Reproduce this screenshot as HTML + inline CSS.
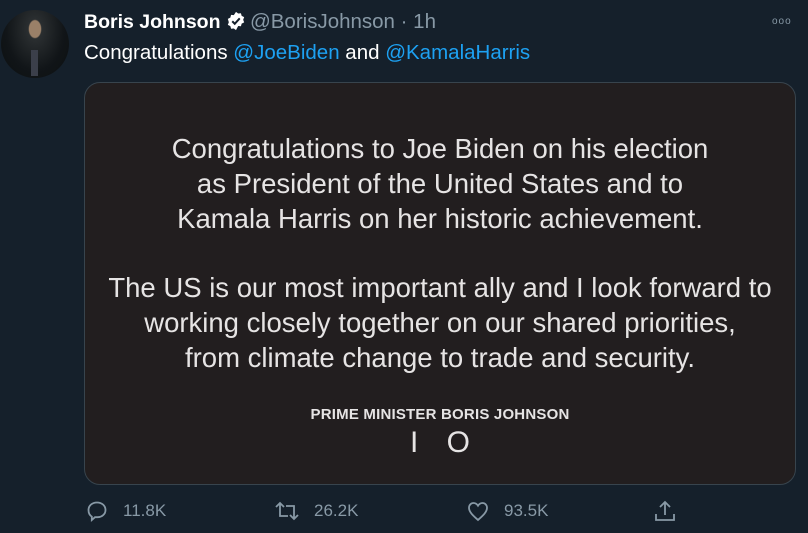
<!DOCTYPE html>
<html><head><meta charset="utf-8"><style>
body{margin:0;width:808px;height:533px;background:#15202b;font-family:"Liberation Sans",sans-serif;overflow:hidden;position:relative}
.av{position:absolute;left:1px;top:10px;width:68px;height:68px;border-radius:50%;background:radial-gradient(ellipse at 50% 28%,#9a8068 0 12%,#2a2e30 14%,#111518 60%,#0b0f10 100%);}
.tie{position:absolute;left:31px;top:50px;width:7px;height:26px;background:#3b3f4a}
.name{position:absolute;left:84px;top:10px;font-size:19.5px;color:#fff;white-space:nowrap}
.name b{font-weight:bold}
.name .h{color:#8899a6;margin-left:4px;font-size:20.5px}
.txt{position:absolute;left:84px;top:41px;font-size:20.5px;color:#fff}
.txt a{color:#1da1f2}
.dots{position:absolute;left:772px;top:16px;color:#8899a6;font-size:10px;letter-spacing:1px}
.card{position:absolute;left:84px;top:82px;width:710px;height:401px;border:1px solid #38444d;border-radius:16px;background:#221e1f;color:#e6e4e4;text-align:center}
.p{position:absolute;left:0;width:100%;font-size:27.5px;line-height:35px;font-weight:300}
.pm{position:absolute;left:0;width:100%;top:323px;font-size:15px;font-weight:bold;letter-spacing:.2px}
.ten{position:absolute;left:0;width:100%;top:343px;font-size:30px;letter-spacing:10px;padding-left:10px;box-sizing:border-box}
.act{position:absolute;top:499px;color:#8899a6;font-size:17px;display:flex;align-items:center}
.act svg{margin-right:14px}
</style></head><body>
<div class="av"></div><div class="tie"></div>
<div class="name"><b>Boris Johnson</b> <svg width="20" height="20" viewBox="0 0 24 24" style="vertical-align:-3px"><path fill="#fff" d="M12 1l2.6 2 3.3-.3.9 3.2 3 1.5-1.2 3.1 1.2 3.1-3 1.5-.9 3.2-3.3-.3L12 23l-2.6-2-3.3.3-.9-3.2-3-1.5 1.2-3.1L2.2 9.4l3-1.5.9-3.2 3.3.3z"/><path d="M7.5 12.3l3 3 6-6.5" stroke="#15202b" stroke-width="2.4" fill="none"/></svg><span class="h">@BorisJohnson · 1h</span></div>
<div class="dots">ooo</div>
<div class="txt">Congratulations <a>@JoeBiden</a> and <a>@KamalaHarris</a></div>
<div class="card">
<div class="p" style="top:48px">Congratulations to Joe Biden on his election<br>as President of the United States and to<br>Kamala Harris on her historic achievement.</div>
<div class="p" style="top:187px">The US is our most important ally and I look forward to<br>working closely together on our shared priorities,<br>from climate change to trade and security.</div>
<div class="pm">PRIME MINISTER BORIS JOHNSON</div>
<div class="ten">I O</div>
</div>
<div class="act" style="left:85px"><svg width="24" height="24" viewBox="0 0 24 24" fill="none" stroke="#8899a6" stroke-width="1.8"><path d="M12 3.5c5 0 8.5 3.2 8.5 7.5s-3.7 7.2-8 7.2H10l-3.2 2.8V17.6C4.7 16.3 3.5 13.8 3.5 11 3.5 6.7 7 3.5 12 3.5z"/></svg>11.8K</div>
<div class="act" style="left:274px"><svg width="26" height="24" viewBox="0 0 26 24" fill="none" stroke="#8899a6" stroke-width="1.8"><path d="M2 8l4-4 4 4M6 4v13h8M24 16l-4 4-4-4M20 20V7h-8"/></svg>26.2K</div>
<div class="act" style="left:466px"><svg width="24" height="24" viewBox="0 0 24 24" fill="none" stroke="#8899a6" stroke-width="1.8"><path d="M12 21C7 16.5 3 13 3 8.8 3 6 5 4 7.6 4c2 0 3.4 1.2 4.4 2.7C13 5.2 14.4 4 16.4 4 19 4 21 6 21 8.8 21 13 17 16.5 12 21z"/></svg>93.5K</div>
<div class="act" style="left:653px"><svg width="24" height="24" viewBox="0 0 24 24" fill="none" stroke="#8899a6" stroke-width="1.8"><path d="M12 3v13M7 8l5-5 5 5M3 15v6h18v-6"/></svg></div>
</body></html>
